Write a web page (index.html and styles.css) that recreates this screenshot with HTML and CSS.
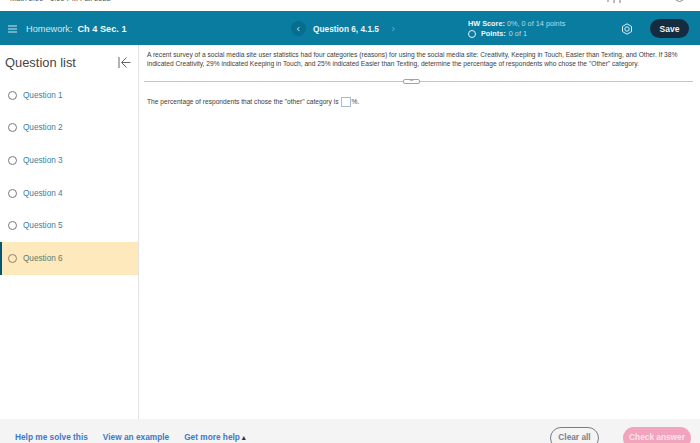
FILE: index.html
```html
<!DOCTYPE html>
<html lang="en">
<head>
<meta charset="utf-8">
<title>Homework: Ch 4 Sec. 1</title>
<link rel="stylesheet" href="styles.css">
</head>
<body>
<div class="topstrip">
  <span class="course">Math 2.00 - 1:00 PM Fall 2022</span>
  <svg class="strip-marks" width="20" height="3" viewBox="0 0 20 3"><path d="M2 0v2M8 0v3M14 0v3" stroke="#777" stroke-width="1"/></svg>
  <span class="strip-circle"></span>
</div>
<header class="bar">
  <div class="bar-left">
    <svg class="menu" width="9" height="8" viewBox="0 0 9 8"><path d="M0 1h9M0 4h9M0 7h9" stroke="#cfe6ee" stroke-width="1.2"/></svg>
    <span class="hw">Homework:</span><b class="hw-name">Ch 4 Sec. 1</b>
  </div>
  <div class="bar-nav">
    <span class="nav-btn dark"><svg width="5" height="6" viewBox="0 0 5 6"><path d="M3.4 1 1.4 3l2 2" fill="none" stroke="#d5e8ef" stroke-width="1"/></svg></span>
    <b class="qname">Question 6, 4.1.5</b>
    <span class="nav-btn"><svg width="5" height="6" viewBox="0 0 5 6"><path d="M1.4 1l2 2-2 2" fill="none" stroke="#6fb2cb" stroke-width="1"/></svg></span>
  </div>
  <div class="score">
    <div class="score-line"><b>HW Score:</b> 0%, 0 of 14 points</div>
    <div class="points"><span class="ring"></span><b>Points:</b> 0 of 1</div>
  </div>
  <svg class="gear" width="12" height="12" viewBox="0 0 12 12"><path d="M6 .8 10.500 3.400v5.200L6 11.200 1.500 8.600V3.400z" fill="none" stroke="#dbecf2" stroke-width="1"/><circle cx="6" cy="6" r="2.200" fill="none" stroke="#dbecf2" stroke-width="1"/></svg>
  <button class="save">Save</button>
</header>
<main class="main">
  <aside class="side">
    <div class="side-head">
      <h2>Question list</h2>
      <svg width="13" height="13" viewBox="0 0 13 13"><path d="M1 1v11M12.500 6.500H4M8.500 1.500l-5 5 5 5" fill="none" stroke="#666" stroke-width="1"/></svg>
    </div>
    <ul class="qlist">
      <li class="q"><span class="radio"></span>Question 1</li>
      <li class="q"><span class="radio"></span>Question 2</li>
      <li class="q"><span class="radio"></span>Question 3</li>
      <li class="q"><span class="radio"></span>Question 4</li>
      <li class="q"><span class="radio"></span>Question 5</li>
      <li class="q current"><span class="radio"></span>Question 6</li>
    </ul>
  </aside>
  <section class="content">
    <p class="stem">A recent survey of a social media site user statistics had four categories (reasons) for using the social media site: Creativity, Keeping in Touch, Easier than Texting, and Other. If 38% indicated Creativity, 29% indicated Keeping in Touch, and 25% indicated Easier than Texting, determine the percentage of respondents who chose the "Other" category.</p>
    <div class="divider"><span class="dots">•••</span></div>
    <p class="answer">The percentage of respondents that chose the "other" category is <span class="box"></span>%.</p>
  </section>
</main>
<footer class="foot">
  <a class="help">Help me solve this</a>
  <a class="help">View an example</a>
  <a class="help">Get more help <span class="caret">▴</span></a>
  <span class="spacer"></span>
  <button class="clear">Clear all</button>
  <button class="check">Check answer</button>
</footer>
</body>
</html>
```

FILE: styles.css
```css
* { box-sizing: border-box; }
html, body { margin: 0; height: 443px; overflow: hidden; }
body { display: flex; flex-direction: column; background: #fff; font-family: "Liberation Sans", Arial, sans-serif; color: #333; }
.topstrip { height: 11px; overflow: hidden; padding-left: 10px; position: relative; display: flex; align-items: flex-start; flex: none; }
.course { display: block; font-size: 7.500px; line-height: 9px; margin-top: -6px; color: #555; }
.strip-marks { margin-left: auto; margin-right: 49px; }
.strip-circle { width: 9px; height: 9px; border: 1px solid #888; border-radius: 50%; margin-top: -7px; margin-right: 16px; }
.bar { height: 34px; background: #0a7c9f; display: flex; align-items: center; color: #fff; flex: none; padding-top: 1px; }
.bar-left { width: 291px; display: flex; align-items: center; padding-left: 8px; font-size: 9px; }
.menu { margin-right: 9px; }
.hw { color: #d4e8ef; margin-right: 5px; font-size: 9.200px; }
.hw-name { font-size: 9.200px; color: #f2f8fa; }
.bar-nav { width: 170px; display: flex; align-items: center; }
.nav-btn { width: 15px; height: 15px; border-radius: 50%; display: flex; align-items: center; justify-content: center; }
.nav-btn.dark { background: #056d8e; }
.qname { font-size: 8.300px; margin: 0 7px 0 7px; color: #edf6f9; }
.score { width: 154px; font-size: 7.300px; line-height: 10px; color: #b7dbe7; margin-left: 7px; }
.score b { color: #f0f7fa; }
.points { display: flex; align-items: center; }
.ring { width: 8px; height: 8px; border: 1px solid #e8f3f6; border-radius: 50%; margin-right: 5px; }
.points b { margin-right: 3px; }
.gear { margin-left: -1px; }
.save { margin-left: 17px; width: 39px; height: 19px; border: 0; border-radius: 10px; background: #152c40; color: #eef2f5; font: bold 8.500px "Liberation Sans", Arial, sans-serif; }
.main { flex: 1; display: flex; min-height: 0; }
.side { width: 139px; border-right: 1px solid #e2e2e2; flex: none; }
.side-head { height: 34px; display: flex; align-items: center; justify-content: space-between; padding: 0 7px 0 5px; }
.side-head h2 { margin: 0; font-size: 12.900px; font-weight: 400; color: #444; }
.qlist { list-style: none; margin: 0; padding: 0; }
.q { height: 32.600px; display: flex; align-items: center; padding-left: 8px; font-size: 8.200px; color: #3b8098; }
.radio { width: 9px; height: 9px; border: 1.200px solid #777; border-radius: 50%; margin-right: 6px; }
.q.current { background: #fde9bc; border-left: 2px solid #07566e; padding-left: 6px; color: #5d7a6c; }
.q.current .radio { border-color: #8c8270; }
.content { flex: 1; padding: 5px 7px 0 5px; min-width: 0; }
.stem { margin: 0 0 0 3px; font-size: 6.650px; line-height: 9px; color: #3d3d3d; }
.divider { height: 1px; background: #c3c3c8; margin-top: 13px; position: relative; display: flex; justify-content: center; }
.dots { position: absolute; top: -2px; left: 259px; width: 17px; height: 5px; background: #fff; border: 1px solid #9aa2b8; border-radius: 2px; font-size: 3px; line-height: 3px; text-align: center; color: #667; }
.answer { margin: 15px 0 0 3px; font-size: 6.650px; line-height: 10px; color: #3d3d3d; display: flex; align-items: center; }
.box { width: 10px; height: 10px; border: 1px solid #a9bcd0; margin: 0 1px 0 2px; }
.foot { height: 24px; flex: none; background: #f4f4f4; display: flex; align-items: flex-start; padding: 12px 0 0 15px; font-size: 8.300px; overflow: hidden; }
.help { color: #3f78c5; font-weight: 700; margin-right: 15px; line-height: 12px; }
.caret { color: #333; font-size: 7px; }
.spacer { flex: 1; }
.clear { width: 49px; height: 22px; margin: -4px 24px 0 0; background: transparent; border: 1px solid #777c88; border-radius: 11px; color: #7d818c; font: bold 8.300px "Liberation Sans", Arial, sans-serif; padding: 0 0 3px; }
.check { width: 68px; height: 22px; margin: -4px 9px 0 0; background: #f2a3bd; border: 0; border-radius: 11px; color: #fbe3eb; font: bold 8.300px "Liberation Sans", Arial, sans-serif; padding: 0 0 3px; }
```
